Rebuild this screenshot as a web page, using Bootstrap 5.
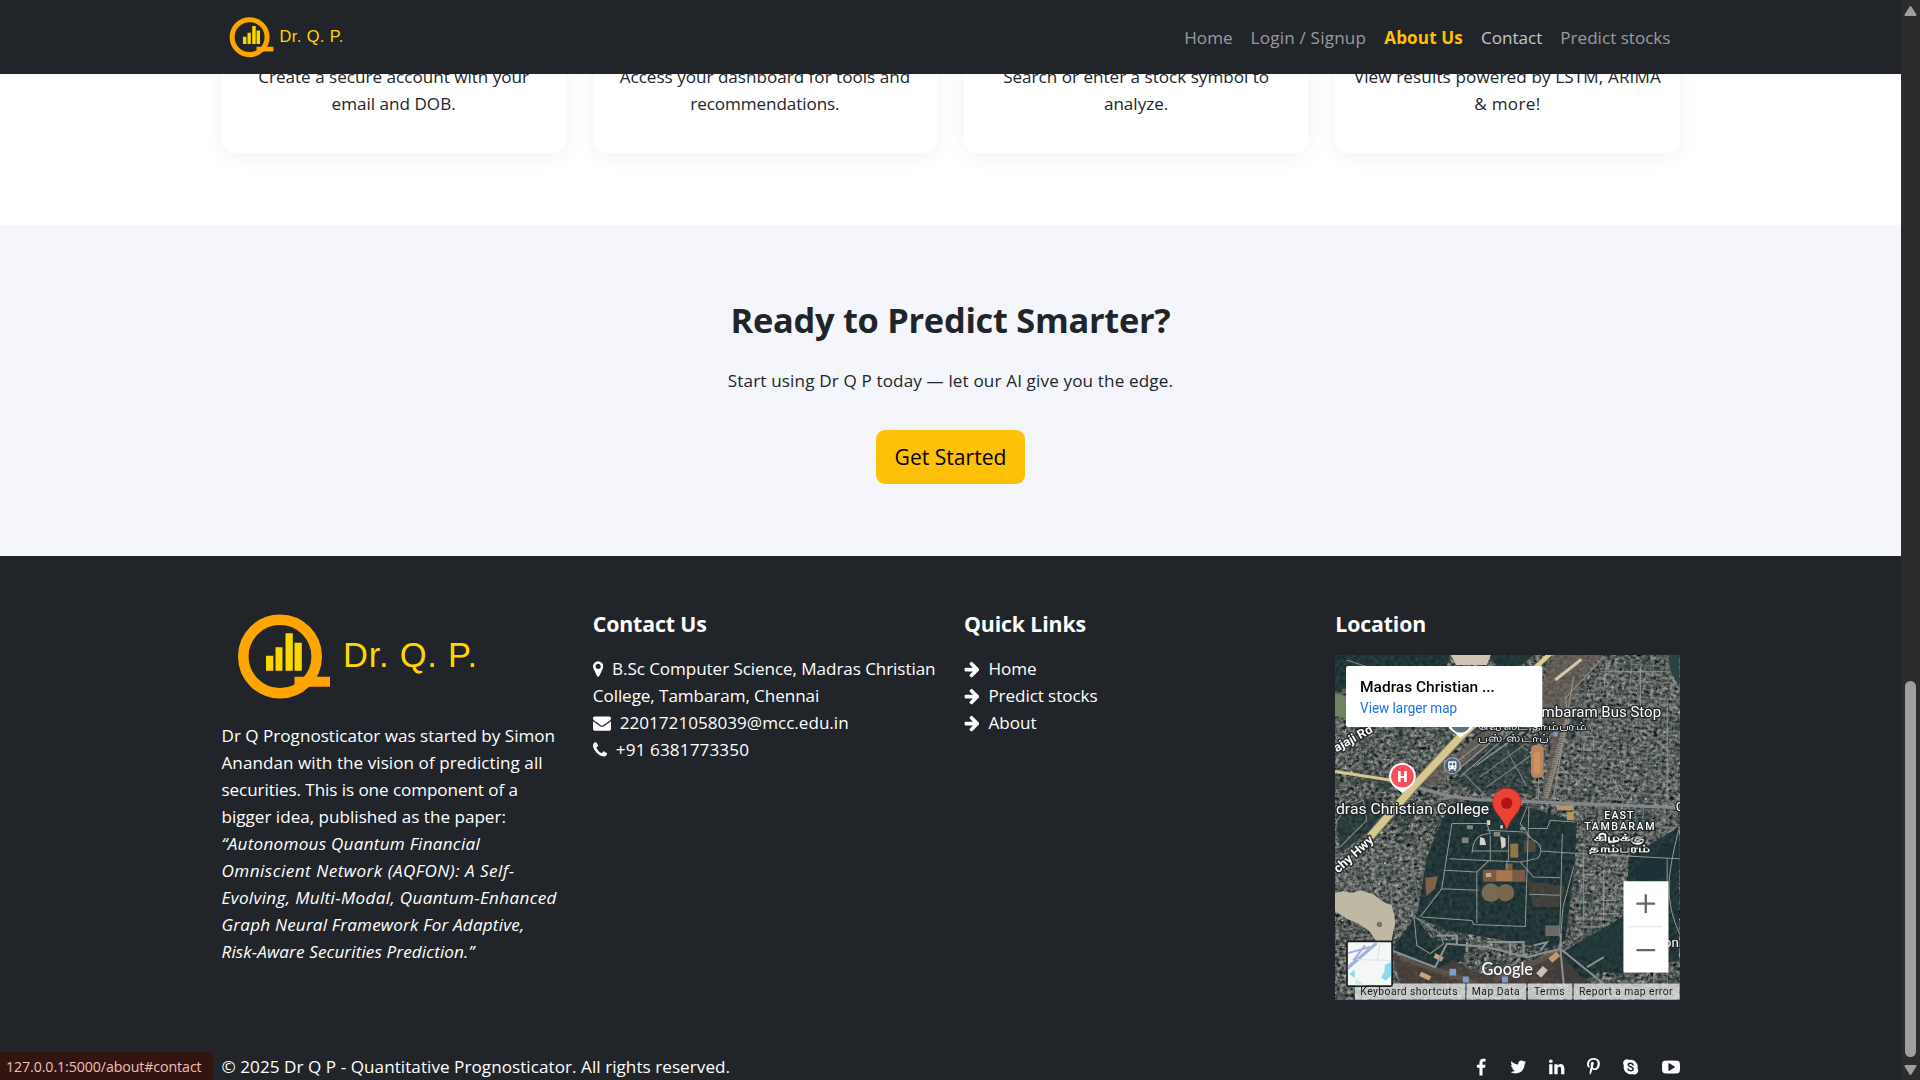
<!DOCTYPE html>
<html lang="en">
<head>
<meta charset="utf-8">
<meta name="viewport" content="width=device-width, initial-scale=1">
<title>Dr Q P - About Us</title>
<link href="https://cdn.jsdelivr.net/npm/bootstrap@5.3.0/dist/css/bootstrap.min.css" rel="stylesheet">
<style>
html{font-size:18px}
body{font-family:"Open Sans","Noto Sans",sans-serif;font-size:17.1px;line-height:27px;height:1080px;color:#212529}
.page-view{width:1901px;height:1080px;overflow:hidden;flex:none}
.container{max-width:1485px}
.site-nav{height:74px;padding:0;z-index:1030}
.site-nav .nav-link{padding:2px 9px 0;line-height:27px}
.site-nav .nav-link.current{color:#ffc107;font-weight:700}
.site-nav .nav-link.hovered{color:rgba(255,255,255,.75)}
.brand-sm{width:128.6px;height:44.3px;display:block}
.brand-lg{width:270px;height:93px;display:block;margin-bottom:19px}
.steps{height:225px}
.step-card{border-radius:13.5px;box-shadow:0 4px 22px rgba(0,0,0,.055);height:153px;padding-top:63px;background:#fff;text-align:center;white-space:nowrap}
.cta{background:#f4f6fb;height:331px;padding-top:73px}
.cta h2{font-size:34.4px;line-height:43px;margin-bottom:26px;font-weight:700;letter-spacing:-.28px}
.cta p{margin-bottom:36px;letter-spacing:.14px}
.cta .btn{width:149px;height:54px;font-size:21.1px;line-height:27px;padding:13px 0 0;border:0;border-radius:9px;white-space:nowrap;color:#000}
.site-footer{background:#212529;color:#fff;height:524px;padding-top:54px;white-space:nowrap}
.site-footer h5{font-size:21.3px;line-height:27px;font-weight:700;margin-bottom:18px;letter-spacing:-.14px}
.foot-base{margin-top:53px}
.ico{height:18px;fill:#fff;vertical-align:-2.57px;flex:none}
.me-ico{margin-right:9px}
.w-marker{width:10.3px}.w-phone{width:14.1px}.w-env{width:18px}.w-arrow{width:15.4px}
.social{gap:22.9px;padding-top:5px;height:27px}
.map-box{width:344.5px;height:344.5px;display:block}
.halo{fill:#fff;stroke:#22282a;stroke-width:8px;stroke-linejoin:round;paint-order:stroke;font-family:Roboto,"Noto Sans",sans-serif}
.k1{letter-spacing:.05px}.k1b{letter-spacing:.12px}.k2{letter-spacing:.2px}.k3{letter-spacing:.27px}.k4{letter-spacing:.34px}.k5{letter-spacing:.49px}.n1{letter-spacing:-.08px}
.status-tip{left:0;bottom:0;width:213px;height:28px;background:#331410;color:#efc1b8;font-size:14.2px;line-height:29px;padding-left:6px;border-top-right-radius:5px;white-space:nowrap;z-index:2000;letter-spacing:-.09px}
.scroll-rail{width:19px;height:1080px;background:#2c2c2c;flex:none}
</style>
</head>
<body class="d-flex overflow-hidden">
<div class="page-view position-relative">
<svg width="0" height="0" class="position-absolute"><defs>
<symbol id="brand" viewBox="0 0 270 93">
<circle cx="58" cy="46.500" r="36.700" fill="none" stroke="#ffa500" stroke-width="10.600"/>
<path fill="#ffa500" d="M72.500 66.700h35.500v10h-35.500z"/>
<path fill="#ffd700" d="M44 45.700h7.300v15H44zM53.500 37.300h7v23.400h-7zM63.500 23.300h7.300v37.400h-7.300zM72.500 32.700h7.300v28h-7.300z"/>
<text x="121" y="57" font-family="Liberation Sans, sans-serif" font-size="34.500" fill="#ffd700" textLength="134" lengthAdjust="spacing">Dr. Q. P.</text>
</symbol>
<symbol id="arrow" viewBox="64 0 1536 1792"><path d="M1600 960q0 54-37 91l-651 651q-39 37-91 37-51 0-90-37l-75-75q-38-38-38-91t38-91l293-293h-704q-52 0-84.500-37.500t-32.500-90.500v-128q0-53 32.500-90.500t84.500-37.500h704l-293-294q-38-36-38-90t38-90l75-75q38-38 90-38 53 0 91 38l651 651q37 35 37 90z"/></symbol>
</defs></svg>

<nav class="navbar navbar-dark site-nav position-absolute top-0 start-0 w-100 bg-dark">
<div class="container d-flex flex-nowrap justify-content-between">
<a href="#" class="d-block"><svg class="brand-sm"><use href="#brand"/></svg></a>
<div class="d-flex navbar-nav flex-row text-nowrap">
<a class="nav-link" href="#">Home</a>
<a class="nav-link k2" href="#">Login / Signup</a>
<a class="nav-link current k1b" href="#">About Us</a>
<a class="nav-link hovered" href="#">Contact</a>
<a class="nav-link" href="#">Predict stocks</a>
</div>
</div>
</nav>

<section class="steps bg-white">
<div class="container"><div class="row">
<div class="col-3"><div class="step-card">Create a secure account with your<br>email and DOB.</div></div>
<div class="col-3"><div class="step-card">Access your dashboard for tools and<br><span class="n1">recommendations.</span></div></div>
<div class="col-3"><div class="step-card">Search or enter a stock symbol to<br>analyze.</div></div>
<div class="col-3"><div class="step-card"><span class="k1b">View results powered by LSTM, ARIMA</span><br><span class="k4">&amp; more!</span></div></div>
</div></div>
</section>

<section class="cta text-center">
<h2>Ready to Predict Smarter?</h2>
<p>Start using Dr Q P today — let our AI give you the edge.</p>
<a class="btn btn-warning" href="#">Get Started</a>
</section>

<footer class="site-footer" id="contact">
<div class="container">
<div class="row">
<div class="col-3">
<svg class="brand-lg"><use href="#brand"/></svg>
<p class="mb-0">Dr Q Prognosticator was started by Simon<br><span class="k1">Anandan with the vision of predicting all</span><br><span class="n1">securities. This is one component of a</span><br>bigger idea, published as the paper:<br><em><span class="k3">“Autonomous Quantum Financial</span><br><span class="k5">Omniscient Network (AQFON): A Self-</span><br><span class="k4">Evolving, Multi-Modal, Quantum-Enhanced</span><br><span class="k2">Graph Neural Framework For Adaptive,</span><br><span class="k1b">Risk-Aware Securities Prediction.”</span></em></p>
</div>
<div class="col-3">
<h5>Contact Us</h5>
<div class="n1"><svg class="ico me-ico w-marker" viewBox="384 0 1024 1792"><path d="M1152 640q0-106-75-181t-181-75-181 75-75 181 75 181 181 75 181-75 75-181zm256 0q0 109-33 179l-364 774q-16 33-47.500 52t-67.500 19-67.500-19-46.500-52l-365-774q-33-70-33-179 0-212 150-362t362-150 362 150 150 362z"/></svg>B.Sc Computer Science, Madras Christian<br>College, Tambaram, Chennai</div>
<div><svg class="ico me-ico w-env" viewBox="0 0 1792 1792"><path d="M1792 710v794q0 66-47 113t-113 47h-1472q-66 0-113-47t-47-113v-794q44 49 101 87 362 246 497 345 57 42 92.500 65.500t94.500 48 110 24.500h2q51 0 110-24.500t94.500-48 92.500-65.500q170-123 498-345 57-39 100-87zm0-294q0 79-49 151t-122 123q-376 261-468 325-10 7-42.500 31t-54 38.500-52 32.500-57.500 27-50 9h-2q-23 0-50-9t-57.500-27-52-32.500-54-38.500-42.500-31q-91-64-262-182.500t-205-142.500q-62-42-117-115.500t-55-136.500q0-78 41.500-130t118.500-52h1472q65 0 112.500 47t47.500 113z"/></svg>2201721058039@mcc.edu.in</div>
<div class="k1b"><svg class="ico me-ico w-phone" viewBox="192 0 1408 1792"><path d="M1600 1240q0 27-10 70.500t-21 68.500q-21 50-122 106-94 51-186 51-27 0-53-3.500t-57.500-12.500-47-14.500-55.500-20.500-49-18q-98-35-175-83-127-79-264-216t-216-264q-48-77-83-175-3-9-18-49t-20.500-55.500-14.500-47-12.500-57.500-3.500-53q0-92 51-186 56-101 106-122 25-11 68.500-21t70.500-10q14 0 21 3 18 6 53 76 11 19 30 54t35 63.500 31 53.500q3 4 17.500 25t21.500 35.500 7 28.500q0 20-28.500 50t-62 55-62 53-28.500 46q0 9 5 22.500t8.500 20.500 14 24 11.500 19q76 137 174 235t235 174q2 1 19 11.500t24 14 20.500 8.500 22.500 5q18 0 46-28.500t53-62 55-62 50-28.500q14 0 28.500 7t35.500 21.500 25 17.500q25 15 53.500 31t63.500 35 54 30q70 35 76 53 3 7 3 21z"/></svg>+91 6381773350</div>
</div>
<div class="col-3">
<h5>Quick Links</h5>
<div><svg class="ico me-ico w-arrow"><use href="#arrow"/></svg>Home</div>
<div class="n1"><svg class="ico me-ico w-arrow"><use href="#arrow"/></svg>Predict stocks</div>
<div><svg class="ico me-ico w-arrow"><use href="#arrow"/></svg>About</div>
</div>
<div class="col-3"><h5>Location</h5>
<svg class="map-box" viewBox="45 45 1032 1032">
<defs>
<filter id="urban" x="0" y="0" width="100%" height="100%" color-interpolation-filters="sRGB"><feTurbulence type="fractalNoise" baseFrequency=".085 .1" numOctaves="4" seed="12"/><feColorMatrix values=".72 .5 0 0 -.27  .72 .46 0 0 -.23  .68 .46 0 0 -.22  0 0 0 0 1"/></filter>
<filter id="patches" x="0" y="0" width="100%" height="100%" color-interpolation-filters="sRGB"><feTurbulence type="fractalNoise" baseFrequency=".018" numOctaves="2" seed="31"/><feColorMatrix values="0 0 0 0 .13  0 0 0 0 .21  0 0 0 0 .21  4 0 0 0 -2.100"/></filter>
<filter id="roofs" x="0" y="0" width="100%" height="100%" color-interpolation-filters="sRGB"><feTurbulence type="fractalNoise" baseFrequency=".11" numOctaves="1" seed="7"/><feColorMatrix values="0 0 0 0 .78  0 0 0 0 .77  0 0 0 0 .73  9 0 0 0 -6"/></filter>
<filter id="woods" x="0" y="0" width="100%" height="100%" color-interpolation-filters="sRGB"><feTurbulence type="fractalNoise" baseFrequency=".08" numOctaves="2" seed="9"/><feColorMatrix values=".17 0 0 0 .05  .17 0 0 0 .125  .15 0 0 0 .14  0 0 0 0 1" result="n"/><feComposite in="n" in2="SourceGraphic" operator="in"/></filter>
<filter id="soft"><feGaussianBlur stdDeviation="5"/></filter>
<pattern id="streets" width="66" height="48" patternUnits="userSpaceOnUse" patternTransform="rotate(4)"><path d="M0 8h66M0 31h40M12 0v48M40 8v40M55 0v31" fill="none" stroke="#94979a" stroke-width="2.500"/></pattern>
<pattern id="streets2" width="58" height="44" patternUnits="userSpaceOnUse" patternTransform="rotate(-8)"><path d="M0 6h58M0 28h34M8 0v44M34 6v38M46 0v28" fill="none" stroke="#8e9192" stroke-width="2.500"/></pattern>
</defs>
<rect x="45" y="45" width="1032" height="1032" filter="url(#urban)"/>
<rect x="45" y="45" width="1032" height="1032" filter="url(#patches)" opacity=".6"/>
<rect x="45" y="45" width="1032" height="1032" filter="url(#roofs)" opacity=".8"/>
<path d="M745 200L860 60H1077V560L960 660 880 860 770 900 780 540 700 480z" fill="url(#streets)" opacity=".65"/>
<path d="M45 600L160 590 340 640 290 830 240 920 215 790 160 755 45 740z" fill="url(#streets2)" opacity=".75"/>
<path d="M45 130L300 260 420 280 280 440 45 380z" fill="url(#streets)" opacity=".3"/>
<g filter="url(#woods)">
<path d="M45 45H390L380 78H240L200 100 45 155z"/>
<path d="M500 45H640L560 110z"/>
<path d="M390 490L520 480 620 500 770 545 762 680 735 900 690 925 440 880 380 870 290 830 320 650 340 600z"/>
<path d="M1077 560L1010 600 925 650 920 760 905 830 820 880 735 930 790 990 900 1000 1077 960z"/>
<path d="M230 905L285 830 340 900 440 900 430 960 340 990 220 930z"/>
<path d="M460 330L560 290 630 340 640 460 470 460 400 420z" opacity=".6"/>
<path d="M50 500L160 470 190 540 60 640z" opacity=".8"/>
<path d="M720 930L830 1000 760 1040 700 1010z"/>
</g>
<path d="M1077 600L960 660 930 700 1000 720 1077 700z" fill="#1d3038" filter="url(#soft)" opacity=".85"/>
<path d="M905 850L860 860 740 940 840 960 905 900z" fill="#233c3c" filter="url(#soft)" opacity=".6"/>
<path d="M1045 45H1077V140L1050 95z" fill="#2b4244"/>
<path d="M700 45H850L790 105 745 210 690 480H662L705 240 560 270 450 365 330 440 300 425 520 250 665 135z" fill="#665d54" opacity=".72"/>
<path d="M850 50L735 175 745 240 680 475M760 110L700 470" fill="none" stroke="#8f8b86" stroke-width="4"/>
<path d="M740 240L675 475" stroke="#958d80" stroke-width="15" stroke-dasharray="4 3"/>
<path d="M783 58L705 120" stroke="#d3c9ad" stroke-width="9"/>
<path d="M560 265L400 400M580 270L420 410M540 265L370 395M610 275L470 375" stroke="#9a9a97" stroke-width="3"/>
<path d="M392 45H512L500 75H408z" fill="#cfc4b5"/>
<path d="M45 160L78 170V235L45 225z" fill="#6c8563"/>
<path d="M45 758L70 752 95 758 120 750 160 762 190 785 215 795 222 822 226 850 220 870 214 905 170 905 148 872 115 850 80 835 45 812z" fill="#beb8a5"/>
<circle cx="178" cy="852" r="8" fill="#71756a"/>
<path d="M215 940L350 985 400 960 480 1000 690 945 715 935 800 1030H240z" fill="#453d39" opacity=".85"/>
<path d="M240 950L470 1030M520 1020L700 940" stroke="#6a5b50" stroke-width="16" opacity=".6"/>
<path d="M300 1000l30 14M343 945l24 12" stroke="#c8a47b" stroke-width="14"/><path d="M690 960l24-20" stroke="#c39966" stroke-width="18"/><path d="M655 1005l20-22" stroke="#c7c3af" stroke-width="20"/>
<path d="M388 985h20v20h-20zM428 1008h18v18h-18zM545 1008h18v18h-18zM700 275h12v14h-12z" fill="#7f9cc8"/>
<path d="M460 380L640 250M480 410L630 300M500 440L640 340M430 400L500 470M560 330L620 440M655 410V480M690 480L700 500" fill="none" stroke="#81878a" stroke-width="3"/>
<rect x="632" y="314" width="38" height="98" rx="14" fill="#b98460"/><rect x="640" y="335" width="20" height="65" rx="8" fill="#d09160"/>
<path d="M710 495h50v15h-50zM740 515h20v25h-20z" fill="#b99560"/>
<path d="M315 712l38-4-8 36-26 24z" fill="#80614a"/>
<path d="M620 720L735 740 715 800 640 800z" fill="#5c4d40" opacity=".5"/><path d="M675 855h42v32h-42z" fill="#6b6a64"/>
<path d="M488 688h127v36H488z" fill="#7a5c46"/><path d="M528 690h48v32h-48z" fill="#a57750"/><path d="M497 698h16v12h-16z" fill="#c6aa85"/>
<circle cx="512" cy="757" r="28" fill="#776a57"/><circle cx="556" cy="757" r="26" fill="#7b654f"/>
<path d="M570 610h24v42h-24z" fill="#8f7847"/><path d="M610 600h36v36h-36z" fill="#4c4b3c"/>
<path d="M480 590l12 4 6 20h-20zM540 588l16 6v24l-12 8zM500 540h10v14h-10zM540 555h8v10h-8z" fill="#d3d2c8"/><path d="M425 592h20v16h-20zM520 575h20v14h-20zM440 555h18v12h-18zM600 560h16v10h-16z" fill="#85857c"/>
<path d="M555 670h22v18h-22z" fill="#756148"/>
<g fill="none" stroke="#909797" stroke-width="3">
<path d="M395 550H500L510 580 C470 582 458 600 455 640M395 550L365 745 300 830 M305 830L455 840 460 852 615 858 626 500M387 655L480 660 600 665 640 710 720 712M375 690L470 695 505 662M470 695V848M365 745L475 750M500 570L610 575 640 600C665 610 668 640 650 655L600 665M455 632H565V585M510 585V660M565 632V665M560 660V690M620 500L600 550 630 590M626 565L680 565 690 540 765 545M726 580L718 890M626 762L718 765M660 632L770 640 1077 655M1040 655V740"/>
<path d="M285 830L360 880 370 910 330 940 290 915 282 830M760 680L728 800 718 930M1077 560C1040 700 1030 780 1077 880"/>
</g>
<g fill="none" stroke="#8c9091" stroke-width="6"><path d="M215 930L345 980 380 910 500 920 620 950 720 925 850 1030M500 905h110v40M570 905v40M350 885h60v30M440 905v30M720 925L730 1030M720 925L722 880M850 950l-50 30M640 915l40-10-20 25"/></g>
<g fill="none" stroke="#9b9a92" stroke-width="3" opacity=".9"><path d="M840 95H1040L1077 150M860 60L850 150M960 80V200M780 290h40v40h-30v-20M780 430L720 380M870 400L910 480M1040 180V460M45 550L80 500 130 480 140 540 60 620M80 60L200 100M830 820h70M830 780h60M850 700v140M790 640v200M780 860h60M1000 960v70M1040 950v80"/></g>
<path d="M285 440L380 466 470 478 1077 502" fill="none" stroke="#85888a" stroke-width="10"/>
<path d="M45 394L215 420" stroke="#d8c78d" stroke-width="9"/>
<path d="M690 40L560 165" stroke="#e2cc86" stroke-width="14"/>
<path d="M560 160L425 285 280 440 150 590" fill="none" stroke="#77705a" stroke-width="28"/><path d="M560 160L425 285 280 440 150 590" fill="none" stroke="#d6c78e" stroke-width="22"/>
<path d="M421 293L388 266A38 38 0 1 1 454 266z" fill="#fff"/><circle cx="421" cy="247" r="31" fill="#5b7484"/>
<circle cx="396" cy="377" r="24" fill="#4b647b" stroke="#a8b4bd" stroke-width="3"/>
<path fill="#fff" d="M388 363h17q4 0 4 4v16q0 4-4 4l4 5h-5l-3-5h-9l-3 5h-5l4-5q-4 0-4-4v-16q0-4 4-4z"/><path fill="#4b647b" d="M388 368h7v8h-7zM398 368h7v8h-7zM388 380h4v3h-4zM401 380h4v3h-4z"/>
<path fill="#fff" d="M247 459L218 436A40 40 0 1 1 276 436z"/><circle cx="247" cy="408" r="34" fill="#f94d5c"/>
<text x="247" y="424" text-anchor="middle" font-family="Roboto, sans-serif" font-weight="900" font-size="44" fill="#fff">H</text>
<g class="halo">
<text x="1022" y="232" text-anchor="end" font-size="44" textLength="358" lengthAdjust="spacingAndGlyphs">mbaram Bus Stop</text>
<text x="474" y="269" font-size="34" textLength="325" lengthAdjust="spacingAndGlyphs">வெஸ்ட் தாம்பரம்</text>
<text x="474" y="305" font-size="34" textLength="211" lengthAdjust="spacingAndGlyphs">பஸ் ஸ்டாப்</text>
<text x="507" y="522" text-anchor="end" font-size="42" textLength="459" lengthAdjust="spacingAndGlyphs">dras Christian College</text>
<text transform="translate(160 275) rotate(-29)" text-anchor="end" font-size="37" font-weight="700" textLength="126" lengthAdjust="spacingAndGlyphs">ajaji Rd</text>
<text transform="translate(163 602) rotate(-42)" text-anchor="end" font-size="38" font-weight="700" textLength="146" lengthAdjust="spacingAndGlyphs">chy Hwy</text>
<text x="897" y="536" text-anchor="middle" font-size="32" font-weight="500" letter-spacing="3">EAST</text>
<text x="897" y="570" text-anchor="middle" font-size="32" font-weight="500" textLength="211">TAMBARAM</text>
<text x="820" y="603" font-size="31" font-weight="700" textLength="152" lengthAdjust="spacingAndGlyphs">கிழக்கு</text>
<text x="806" y="636" font-size="31" font-weight="700" textLength="182" lengthAdjust="spacingAndGlyphs">தாம்பரம்</text>
<text x="1066" y="513" font-size="40">C</text>
<text x="1075" y="920" text-anchor="end" font-size="40">on</text>
</g>
<path fill="#c5221f" d="M516 487a43 43 0 0 1 87 0c0 30-32 44-43 84-11-40-44-54-44-84z"/><path fill="#ea4335" d="M518 487a41.500 41.500 0 0 1 83 0c0 28-30 42-41.500 80-11.500-38-41.500-52-41.500-80z"/><circle cx="559.500" cy="489" r="17" fill="#b31412"/>
<rect x="78" y="78" width="588" height="183" rx="6" fill="#fff"/>
<g font-family="Roboto, sans-serif">
<text x="120" y="157" font-size="43" font-weight="500" fill="#000" textLength="404" lengthAdjust="spacingAndGlyphs">Madras Christian ...</text>
<text x="120" y="218" font-size="42" fill="#1a73e8" textLength="291" lengthAdjust="spacingAndGlyphs">View larger map</text>
<text x="484" y="1005" font-family="Lato, sans-serif" font-size="53" font-weight="500" fill="#fff" stroke="#444" stroke-width="3" paint-order="stroke" textLength="154" lengthAdjust="spacingAndGlyphs">Google</text>
<path fill="#e8e8e8" fill-opacity=".78" d="M105 1029h330v48H105zM439 1029h179v48H439zM623 1029h133v48H623zM760 1029h317v48H760z"/>
<g font-size="31" fill="#1c1c1c"><text x="121" y="1064" textLength="291">Keyboard shortcuts</text><text x="455" y="1064" textLength="143">Map Data</text><text x="641" y="1064" textLength="92">Terms</text><text x="776" y="1064" textLength="280">Report a map error</text></g>
</g>
<rect x="909" y="723" width="135" height="273" rx="2" fill="#fff"/><path d="M924 859h102" stroke="#e0e0e0" stroke-width="3"/><path d="M948 790h56M976 762v56M948 929h56" stroke="#666" stroke-width="7"/>
<rect x="81" y="903" width="135" height="134" rx="4" fill="#f5f6f6" stroke="#1b1c1e" stroke-width="5"/>
<path d="M84 978L170 906M84 938L150 920M100 960L135 915M170 910L84 985" fill="none" stroke="#a4b1dc" stroke-width="6"/><path d="M110 957L213 960M180 906L172 958" fill="none" stroke="#dadfea" stroke-width="3"/>
<path fill="#84dced" d="M213 965l-18 8-2 20-10 18 14 10 16-16zM88 1000l16-11v24z"/><path fill="#cdf3d4" d="M107 1034v-20l28 20z"/>
</svg></div>
</div>
<div class="d-flex justify-content-between foot-base"><div class="k1">© 2025 Dr Q P - Quantitative Prognosticator. All rights reserved.</div>
<div class="d-flex social">
<svg class="ico" width="10.300" viewBox="479 0 1024 1792"><path d="M1343 12v264h-157q-86 0-116 36t-30 108v189h293l-39 296h-254v759h-306v-759h-255v-296h255v-218q0-186 104-288.500t277-102.500q147 0 228 12z" transform="translate(90 70)"/></svg>
<svg class="ico" width="16.700" viewBox="64 0 1664 1792"><path d="M1684 408q-67 98-162 167 1 14 1 42 0 130-38 259.500t-115.500 248.500-184.500 210.500-258 146-323 54.500q-271 0-496-145 35 4 78 4 225 0 401-138-105-2-188-64.500t-114-159.500q33 5 61 5 43 0 85-11-112-23-185.500-111.500t-73.500-205.500v-4q68 38 146 41-66-44-105-115t-39-154q0-88 44-163 121 149 294.500 238.500t371.500 99.500q-8-38-8-74 0-134 94.500-228.500t228.500-94.500q140 0 236 102 109-21 205-78-37 115-142 178 93-10 186-50z"/></svg>
<svg class="ico" width="15.400" viewBox="128 0 1536 1792"><path d="M477 625v991h-330v-991h330zm21-306q1 73-50.500 122t-135.500 49h-2q-82 0-132-49t-50-122q0-74 51.500-122.500t134.500-48.500 133 48.500 51 122.500zm1166 729v568h-329v-530q0-105-40.500-164.500t-126.500-59.500q-63 0-105.500 34.500t-63.500 85.500q-11 30-11 81v553h-329q2-399 2-647t-1-296l-1-48h329v144h-2q20-32 41-56t56.500-52 87-43.500 114.500-15.500q171 0 275 113.500t104 332.500z"/></svg>
<svg class="ico" width="12.900" viewBox="256 0 1280 1792"><path d="M256 597q0-108 37.500-203.500t103.500-166.500 152-123 185-78 202-26q158 0 294 66.500t221 193.500 85 287q0 96-19 188t-60 177-100 149.500-145 103-189 38.500q-68 0-135-32t-96-88q-10 39-28 112.500t-23.500 95-20.500 71-26 71-32 62.500-46 77.500-62 86.500l-14 5-9-10q-15-157-15-188 0-92 21.500-206.500t66.500-287.500 52-203q-32-65-32-169 0-83 52-156t132-73q61 0 95 40.500t34 102.500q0 66-44 191t-44 187q0 63 45 104.500t109 41.500q55 0 102-25t78.500-68 56-95 38-110.500 20-111 6.500-99.500q0-173-109.500-269.500t-285.500-96.500q-200 0-334 129.500t-134 328.500q0 44 12.500 85t27 65 27 45.500 12.500 30.500q0 28-15 73t-37 45q-2 0-17-3-51-15-90.500-56t-61-94.500-32.500-108-11-106.500z"/></svg>
<svg class="ico" width="15.400" viewBox="128 0 1536 1792"><path d="M512 128a384 384 0 0 1 225 73A700 700 0 0 1 1576 1055 384 384 0 0 1 1055 1591 700 700 0 0 1 216 737 384 384 0 0 1 512 128z"/><path d="M1130 690C1090 560 980 530 880 530 740 530 650 600 650 700 650 900 1150 830 1150 1070 1150 1190 1040 1265 890 1265 760 1265 660 1210 630 1090" fill="none" stroke="#212529" stroke-width="150" stroke-linecap="round"/></svg>
<svg class="ico" width="18" viewBox="0 0 1792 1792"><path d="M1280 896q0-37-30-54l-512-320q-31-20-65-2-33 18-33 56v640q0 38 33 56 16 8 31 8 20 0 34-10l512-320q30-17 30-54zm512 0q0 96-1 150t-8.500 136.500-22.500 147.500q-16 73-69 123t-124 58q-222 25-671 25t-671-25q-71-8-124.500-58t-69.500-123q-14-65-21.500-147.500t-8.500-136.500-1-150 1-150 8.500-136.500 22.500-147.500q16-73 69-123t124-58q222-25 671-25t671 25q71 8 124.500 58t69.500 123q14 65 21.500 147.500t8.500 136.500 1 150z"/></svg>
</div></div>
</div>
</footer>
<div class="status-tip position-absolute">127.0.0.1:5000/about#contact</div>
</div>
<svg class="scroll-rail" viewBox="0 0 19 1080"><g fill="#9f9f9f"><rect x="4" y="681" width="11" height="376" rx="5.500"/><path d="M9.500 7l5 8h-10zM9.500 1074l5-8h-10z" stroke="#9f9f9f" stroke-width="2" stroke-linejoin="round"/></g></svg>
<script src="https://cdn.jsdelivr.net/npm/bootstrap@5.3.0/dist/js/bootstrap.bundle.min.js"></script>
</body>
</html>
